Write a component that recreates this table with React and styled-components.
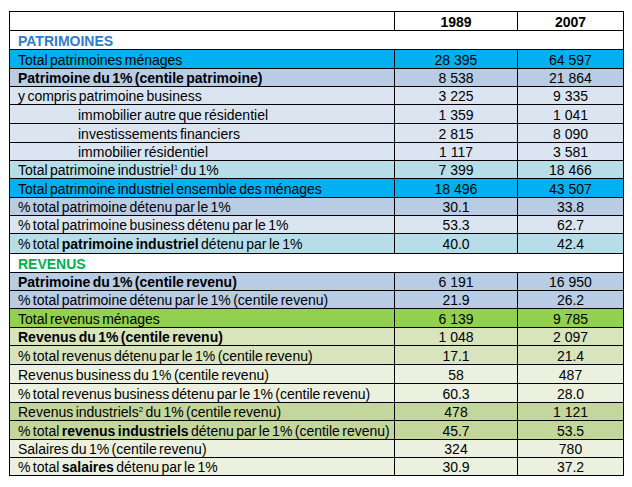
import React from "react";
import styled, { createGlobalStyle } from "styled-components";

const GlobalStyle = createGlobalStyle`
  html, body {
    margin: 0;
    padding: 0;
    background: #ffffff;
  }
  body {
    font-family: "Liberation Sans", Arial, sans-serif;
    font-size: 14px;
    word-spacing: -1.5px;
    color: #000000;
  }
`

const Page = styled.div`
  padding: 11px 0 0 9px;
  width: 632px;
  height: 487px;
  box-sizing: border-box;
`

const Table = styled.div`
  display: flex;
  flex-direction: column;
  gap: 1px;
  width: 615px;
  padding: 1px;
  box-sizing: border-box;
  background: #000000;
`

const Row = styled.div`
  display: grid;
  grid-template-columns: 384px 122px 105px;
  gap: 1px;
  height: ${(p) => p.$h - 1}px;
`

const Cell = styled.div`
  display: flex;
  align-items: center;
  padding-top: 1px;
  box-sizing: border-box;
  background: ${(p) => p.$bg || "#ffffff"};
  white-space: nowrap;
  overflow: hidden;
  line-height: 1;
`

const LabelCell = styled(Cell)`
  padding-left: ${(p) => (p.$indent ? 68 : 8)}px;
  font-weight: ${(p) => (p.$bold ? "bold" : "normal")};
`

const NumCell = styled(Cell)`
  justify-content: center;
  word-spacing: 0;
  font-weight: ${(p) => (p.$bold ? "bold" : "normal")};
`

const SectionCell = styled(Cell)`
  grid-column: 1 / -1;
  padding-left: 8px;
  font-weight: bold;
  color: ${(p) => p.$color};
`

const Sup = styled.sup`
  font-size: 8px;
  vertical-align: 5px;
  line-height: 0;
`

const BLUE = "#00b0f0";
const BLUE_MID = "#b8cce4";
const BLUE_LIGHT = "#dbe5f1";
const TEAL = "#b7dee8";
const GREEN = "#92d050";
const OLIVE = "#d7e4bc";
const OLIVE_LIGHT = "#ebf1de";
const OLIVE_MID = "#c3d69b";

const rows = [
  { section: "PATRIMOINES", color: "#2f7ccc", h: 19 },
  { label: "Total patrimoines ménages", a: "28 395", b: "64 597", bg: BLUE, h: 19 },
  { label: <b>Patrimoine du 1% (centile patrimoine)</b>, a: "8 538", b: "21 864", bg: BLUE_MID, h: 18 },
  { label: "y compris patrimoine business", a: "3 225", b: "9 335", bg: BLUE_LIGHT, h: 18 },
  { label: "immobilier autre que résidentiel", a: "1 359", b: "1 041", bg: BLUE_LIGHT, h: 19, indent: true },
  { label: "investissements financiers", a: "2 815", b: "8 090", bg: BLUE_LIGHT, h: 19, indent: true },
  { label: "immobilier résidentiel", a: "1 117", b: "3 581", bg: BLUE_LIGHT, h: 18, indent: true },
  { label: <>Total patrimoine industriel<Sup>1</Sup> du 1%</>, a: "7 399", b: "18 466", bg: TEAL, h: 18 },
  { label: "Total patrimoine industriel ensemble des ménages", a: "18 496", b: "43 507", bg: BLUE, h: 19 },
  { label: "% total patrimoine détenu par le 1%", a: "30.1", b: "33.8", bg: BLUE_MID, h: 18 },
  { label: "% total patrimoine business détenu par le 1%", a: "53.3", b: "62.7", bg: BLUE_LIGHT, h: 18 },
  { label: <>% total <b>patrimoine industriel</b> détenu par le 1%</>, a: "40.0", b: "42.4", bg: TEAL, h: 20 },
  { section: "REVENUS", color: "#00b050", h: 19 },
  { label: <b>Patrimoine du 1% (centile revenu)</b>, a: "6 191", b: "16 950", bg: BLUE_MID, h: 18 },
  { label: "% total patrimoine détenu par le 1% (centile revenu)", a: "21.9", b: "26.2", bg: BLUE_MID, h: 18 },
  { label: "Total revenus ménages", a: "6 139", b: "9 785", bg: GREEN, h: 19 },
  { label: <b>Revenus du 1% (centile revenu)</b>, a: "1 048", b: "2 097", bg: OLIVE, h: 18 },
  { label: "% total revenus détenu par le 1% (centile revenu)", a: "17.1", b: "21.4", bg: OLIVE, h: 19 },
  { label: "Revenus business du 1% (centile revenu)", a: "58", b: "487", bg: OLIVE_LIGHT, h: 19 },
  { label: "% total revenus business détenu par le 1% (centile revenu)", a: "60.3", b: "28.0", bg: OLIVE_LIGHT, h: 19 },
  { label: <>Revenus industriels<Sup>2</Sup> du 1% (centile revenu)</>, a: "478", b: "1 121", bg: OLIVE_MID, h: 18 },
  { label: <>% total <b>revenus industriels</b> détenu par le 1% (centile revenu)</>, a: "45.7", b: "53.5", bg: OLIVE_MID, h: 19 },
  { label: "Salaires du 1% (centile revenu)", a: "324", b: "780", bg: OLIVE_LIGHT, h: 18 },
  { label: <>% total <b>salaires</b> détenu par le 1%</>, a: "30.9", b: "37.2", bg: OLIVE_LIGHT, h: 18 },
];

const App = () => {
  return (
    <Page>
      <GlobalStyle />
      <Table>
        <Row $h={19}>
          <LabelCell />
          <NumCell $bold>1989</NumCell>
          <NumCell $bold>2007</NumCell>
        </Row>
        {rows.map((r, i) =>
          r.section ? (
            <Row key={i} $h={r.h}>
              <SectionCell $color={r.color}>{r.section}</SectionCell>
            </Row>
          ) : (
            <Row key={i} $h={r.h}>
              <LabelCell $bg={r.bg} $indent={r.indent}>
                <span>{r.label}</span>
              </LabelCell>
              <NumCell $bg={r.bg}>{r.a}</NumCell>
              <NumCell $bg={r.bg}>{r.b}</NumCell>
            </Row>
          )
        )}
      </Table>
    </Page>
  );
}

export default App;
